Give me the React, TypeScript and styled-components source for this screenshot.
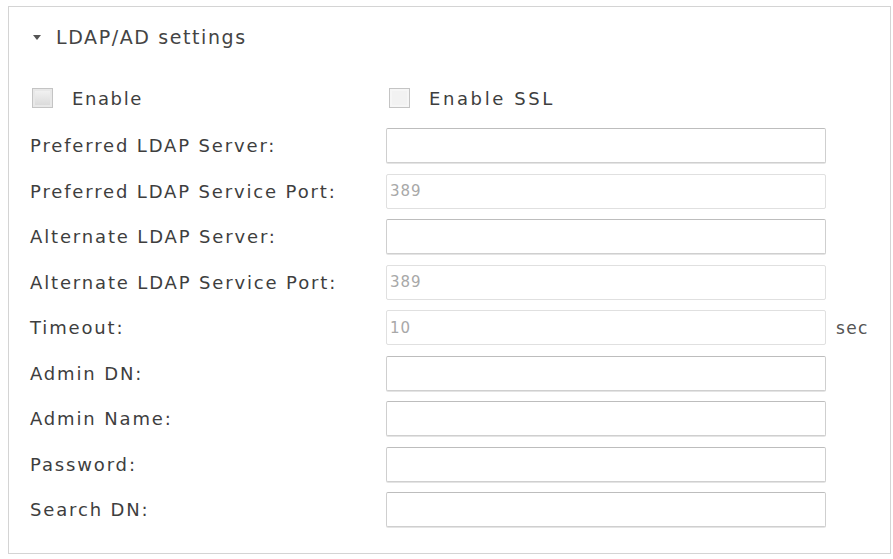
import styled, { createGlobalStyle } from "styled-components";

const GlobalStyle = createGlobalStyle`
  body {
    margin: 0;
    background: #fff;
    font-family: "DejaVu Sans", Verdana, sans-serif;
  }
`;

const Panel = styled.section`
  box-sizing: border-box;
  width: 883px;
  margin: 6px 0 0 8px;
  border: 1px solid #d4d4d4;
  padding: 16px 0 26px 21px;
  color: #3e3e3e;
  font-size: 18px;
  letter-spacing: 1.85px;
`;

const Header = styled.div`
  height: 28px;
  display: flex;
  align-items: center;
  gap: 15px;
  padding-left: 3px;
  font-size: 19px;
  letter-spacing: 1.6px;
  color: #444;
`;

const Caret = styled.span`
  width: 0;
  height: 0;
  border-left: 4px solid transparent;
  border-right: 4px solid transparent;
  border-top: 5px solid #555;
`;

const Grid = styled.div`
  display: grid;
  grid-template-columns: 356px 440px auto;
  row-gap: 10.5px;
  align-items: center;
`;

const CheckRow = styled.div`
  grid-column: 1 / -1;
  display: grid;
  grid-template-columns: 356px auto;
  align-items: center;
  height: 24px;
  margin: 35px 0 7.5px;
`;

const CheckLabel = styled.label<{ $inset?: number; $spread?: number }>`
  display: flex;
  align-items: center;
  gap: 19px;
  padding-left: ${(p) => p.$inset ?? 2}px;
  letter-spacing: ${(p) => p.$spread ?? 1.6}px;
`;

const Box = styled.span<{ $shade?: boolean }>`
  box-sizing: border-box;
  width: 21px;
  height: 20px;
  border: 1px solid #c4c4c4;
  background: ${(p) =>
    p.$shade ? "linear-gradient(#f4f4f4, #d8d8d8)" : "#f2f2f2"};
  box-shadow: inset 0 0 0 2px ${(p) => (p.$shade ? "#e8e8e8" : "#f6f6f6")};
`;

const Label = styled.div`
  line-height: 35px;
  white-space: nowrap;
`;

const Field = styled.input`
  box-sizing: border-box;
  width: 440px;
  height: 35px;
  margin: 0;
  padding: 0 0 0 3px;
  border: 1px solid #cfcfcf;
  border-top-color: #bdbdbd;
  border-radius: 2px;
  box-shadow: 0 1px 0 #e4e4e4;
  background: #fff;
  font-family: "DejaVu Sans", Verdana, sans-serif;
  font-size: 15px;
  letter-spacing: 1px;
  color: #a8a8a8;
  outline: none;

  &:disabled {
    border-color: #e0e0e0;
    box-shadow: none;
  }
`;

const Unit = styled.span`
  padding-left: 10px;
  font-size: 17px;
  letter-spacing: 1.4px;
  color: #555;
`;

type Row = { label: string; value?: string; unit?: string; locked?: boolean };

const rows: Row[] = [
  { label: "Preferred LDAP Server:" },
  { label: "Preferred LDAP Service Port:", value: "389", locked: true },
  { label: "Alternate LDAP Server:" },
  { label: "Alternate LDAP Service Port:", value: "389", locked: true },
  { label: "Timeout:", value: "10", unit: "sec", locked: true },
  { label: "Admin DN:" },
  { label: "Admin Name:" },
  { label: "Password:" },
  { label: "Search DN:" },
];

export default function App() {
  return (
    <>
      <GlobalStyle />
      <Panel>
        <Header>
          <Caret />
          LDAP/AD settings
        </Header>
        <Grid>
          <CheckRow>
            <CheckLabel>
              <Box $shade />
              Enable
            </CheckLabel>
            <CheckLabel $inset={3} $spread={2.6}>
              <Box />
              Enable SSL
            </CheckLabel>
          </CheckRow>
          {rows.map((r) => (
            <>
              <Label key={r.label}>{r.label}</Label>
              <Field
                defaultValue={r.value}
                disabled={r.locked}
                type={r.label === "Password:" ? "password" : "text"}
              />
              <Unit>{r.unit}</Unit>
            </>
          ))}
        </Grid>
      </Panel>
    </>
  );
}
